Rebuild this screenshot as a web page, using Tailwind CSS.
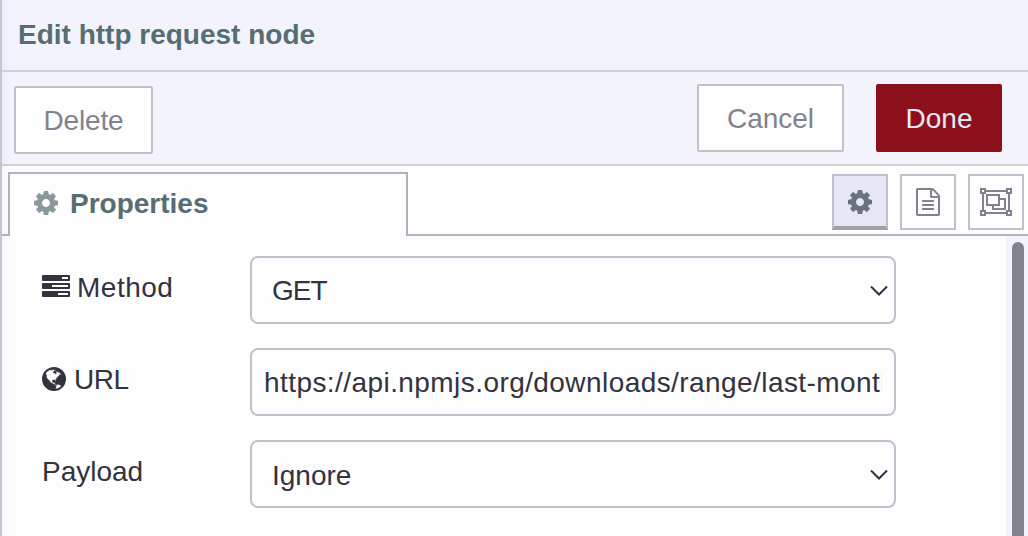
<!DOCTYPE html>
<html lang="en">
<head>
<meta charset="utf-8">
<title>Edit http request node</title>
<script src="https://cdn.jsdelivr.net/npm/@tailwindcss/browser@4"></script>
</head>
<body class="w-[1028px] h-[536px] overflow-hidden bg-[#fdfdfe] font-['Liberation_Sans',Arial,sans-serif] text-[28px] leading-[32px] text-[#33333d]">
<svg class="hidden">
  <symbol id="cog" viewBox="0 0 1792 1792"><path d="M1152 896q0-106-75-181t-181-75-181 75-75 181 75 181 181 75 181-75 75-181zm512-109v222q0 12-8 23t-20 13l-185 28q-19 54-39 91 35 50 107 138 10 12 10 25t-9 23q-27 37-99 108t-94 71q-12 0-26-9l-138-108q-44 23-91 38-16 136-29 186-7 28-36 28h-222q-14 0-24.5-8.5t-11.5-21.5l-28-184q-49-16-90-37l-141 107q-10 9-25 9-14 0-25-11-126-114-165-168-7-10-7-23 0-12 8-23 15-21 51-66.5t54-70.5q-27-50-41-99l-183-27q-13-2-21-12.5t-8-23.5v-222q0-12 8-23t19-13l186-28q14-46 39-92-40-57-107-138-10-12-10-24 0-10 9-23 26-36 98.5-107.5t94.5-71.5q13 0 26 10l138 107q44-23 91-38 16-136 29-186 7-28 36-28h222q14 0 24.5 8.5t11.5 21.5l28 184q49 16 90 37l142-107q9-9 24-9 13 0 25 10 129 119 165 170 7 8 7 22 0 12-8 23-15 21-51 66.5t-54 70.5q26 50 41 98l183 28q13 2 21 12.5t8 23.5z"/></symbol>
</svg>
<div class="flex h-[536px] flex-col border-l-2 border-[#c5c4d2]">
  <header class="h-[72px] border-b-2 border-[#d0cfdc] bg-linear-to-r from-[#ebebf5] to-[#f3f3fc] to-[8px] pl-4 pt-[19px] font-bold text-[#566e73]">Edit http request node</header>
  <div class="flex h-[94px] items-start border-b-2 border-[#d0cfdc] bg-linear-to-r from-[#ebebf5] to-[#f3f3fc] to-[8px] pl-3 pr-[26px] pt-3 text-[#82828f]">
    <button class="mt-[2px] h-[68px] w-[139px] rounded-[2px] border-2 border-[#c1c0cd] bg-[#fdfdfe] pt-[2px] tracking-[-0.15px]">Delete</button>
    <button class="ml-auto h-[68px] w-[147px] rounded-[2px] border-2 border-[#c1c0cd] bg-[#fdfdfe] pt-[2px]">Cancel</button>
    <button class="ml-8 h-[68px] w-[126px] rounded-[2px] bg-[#8c101c] pt-[2px] text-[#e6e7f5]">Done</button>
  </div>
  <div class="flex h-[70px] items-stretch bg-linear-to-r from-[#f5f5fa] to-[#fdfdfe] to-[8px]">
    <div class="w-[6px] border-b-2 border-[#b2b1bd]"></div>
    <div class="mt-[6px] flex w-[400px] border-2 border-b-0 border-[#b2b1bd] bg-[#fdfdfe] pl-[22px] pt-[14px] font-bold text-[#566e73]">
      <svg class="mt-px size-[28px] fill-[#8a979c]"><use href="#cog"/></svg>
      <span class="ml-[10px]">Properties</span>
    </div>
    <div class="flex flex-1 justify-end gap-3 border-b-2 border-[#b2b1bd] pr-1 pt-2">
      <div class="flex size-[56px] justify-center border-2 border-b-4 border-[#c1c0cd] border-b-[#a0a2aa] bg-[#e6e7f5] pt-3"><svg class="size-[28px] fill-[#6a727e]"><use href="#cog"/></svg></div>
      <div class="flex size-[56px] justify-center border-2 border-[#c1c0cd] pt-3"><svg class="size-[28px] fill-[#82828f]" viewBox="0 0 1792 1792"><path d="M1596 380q28 28 48 76t20 88v1152q0 40-28 68t-68 28h-1344q-40 0-68-28t-28-68v-1600q0-40 28-68t68-28h896q40 0 88 20t76 48zm-444-244v376h376q-10-29-22-41l-313-313q-12-12-41-22zm384 1528v-1024h-416q-40 0-68-28t-28-68v-416h-768v1536h1280zm-1024-864q0-14 9-23t23-9h704q14 0 23 9t9 23v64q0 14-9 23t-23 9h-704q-14 0-23-9t-9-23v-64zm736 224q14 0 23 9t9 23v64q0 14-9 23t-23 9h-704q-14 0-23-9t-9-23v-64q0-14 9-23t23-9h704zm0 256q14 0 23 9t9 23v64q0 14-9 23t-23 9h-704q-14 0-23-9t-9-23v-64q0-14 9-23t23-9h704z"/></svg></div>
      <div class="flex size-[56px] justify-center border-2 border-[#c1c0cd] pt-3"><svg class="h-[28px] w-[32px]" viewBox="0 0 32 28" fill="none" stroke="#82828f" stroke-width="2"><path d="M6 3h20M6 25h20M3 6v16M29 6v16M1 1h4v4h-4zM27 1h4v4h-4zM1 23h4v4h-4zM27 23h4v4h-4zM7 7h12v10h-12zM19 11h6v10h-12v-4"/></svg></div>
    </div>
  </div>
  <div class="flex flex-1 bg-linear-to-r from-[#f5f5fa] to-[#fdfdfe] to-[8px]">
    <div class="flex flex-1 flex-col gap-6 pl-10 pt-5">
      <div class="flex h-[68px]">
        <label class="flex w-[208px] pt-4"><svg class="mt-px size-[28px] fill-[#33333d]" viewBox="0 0 1792 1792"><path d="M1024 1408h640v-128h-640v128zm-384-512h1024v-128h-1024v128zm640-512h384v-128h-384v128zm512 832v256q0 26-19 45t-45 19h-1664q-26 0-45-19t-19-45v-256q0-26 19-45t45-19h1664q26 0 45 19t19 45zm0-512v256q0 26-19 45t-45 19h-1664q-26 0-45-19t-19-45v-256q0-26 19-45t45-19h1664q26 0 45 19t19 45zm0-512v256q0 26-19 45t-45 19h-1664q-26 0-45-19t-19-45v-256q0-26 19-45t45-19h1664q26 0 45 19t19 45z"/></svg><span class="ml-[7px] tracking-[0.5px]">Method</span></label>
        <div class="flex w-[646px] items-center justify-between rounded-[8px] border-2 border-[#c1c0cd] pl-5 pr-[5px]"><span class="pt-[2px] tracking-[-1px]">GET</span><svg class="mt-px h-3 w-5" viewBox="0 0 20 12" fill="none" stroke="#33333d" stroke-width="2"><path d="M2 1.5l8 8 8-8"/></svg></div>
      </div>
      <div class="flex h-[68px]">
        <label class="flex w-[208px] pt-4"><svg class="-ml-[2px] mt-px size-[28px] fill-[#33333d]" fill-rule="evenodd" viewBox="0 0 1792 1792"><path d="M896 128a768 768 0 1 1 0 1536a768 768 0 1 1 0-1536zm274 521q-2 1-9.5 9.5t-13.5 9.5q2 0 4.5-5t5-11 3.5-7q6-7 22-15 14-6 52-12 34-8 51 11-2-2 9.5-13t14.5-12q3-2 15-4.5t15-7.5l2-22q-12 1-17.5-7t-6.5-21q0 2-6 8 0-7-4.5-8t-11.5 1-9 1q-10-3-15-7.5t-8-16.5-4-15q-2-5-9.5-11t-9.5-10q-1-2-2.5-5.5t-3-6.5-4-5.5-5.5-2.5-7 5-7.5 10-4.5 5q-3-2-6-1.5t-4.5 1-4.5 3-5 3.5q-3 2-8.5 3t-8.5 2q15-5-1-11-10-4-16-3 9-4 7.5-12t-8.5-14h5q-1-4-8.5-8.5t-17.5-8.5-13-6q-8-5-34-9.5t-33-.5q-5 6-4.5 10.5t4 14 3.5 12.5q1 6-5.5 13t-6.5 12q0 7 14 15.5t10 21.5q-3 8-16 16t-16 12q-5 8-1.5 18.5t10.5 16.5q2 2 1.5 4t-3.5 4.5-5.5 4-6.5 3.5l-3 2q-11 5-20.5-6t-13.5-26q-7-25-16-30-23-8-29 1-5-13-41-26-25-9-58-4 6-1 0-15-7-15-19-12 3-6 4-17.5t1-13.5q3-13 12-23 1-1 7-8.5t9.5-13.5.5-6q35 4 50-11 5-5 11.5-17t10.5-17q9-6 14-5.5t14.5 5.5 14.5 5q14 1 15.5-11t-7.5-20q12 1 3-17-4-7-8-9-12-4-27 5-8 4 2 8-1-1-9.5 10.5t-16.5 17.5-16-5q-1-1-5.5-13.5t-9.5-13.5q-8 0-16 15 3-8-11-15t-24-8q19-12-8-27-7-4-20.5-5t-19.5 4q-5 7-5.5 11.5t5 8 10.5 5.5 11.5 4 8.5 3q14 10 8 14-2 1-8.5 3.5t-11.5 4.5-6 4q-3 4 0 14t-2 14q-5-5-9-17.5t-7-16.5q7 9-25 6l-10-1q-4 0-16 2t-20.5 1-13.5-8q-4-8 0-20 1-4 4-2-4-3-11-9.5t-10-8.5q-46 15-94 41 6 1 12-1 5-2 13-6.5t10-5.5q34-14 42-7l5-5q14 16 20 25-7-4-30-1-20 6-22 12 7 12 5 18-4-3-11.5-10t-14.5-11-15-5q-16 0-22 1-146 80-235 222 7 7 12 8 4 1 5 9t2.5 11 11.5-3q9 8 3 19 1-1 44 27 19 17 21 21 3 11-10 18-1-2-9-9t-9-4q-3 5 .5 18.5t10.5 12.5q-7 0-9.5 16t-2.5 35.5-1 23.5l2 1q-3 12 5.5 34.5t21.5 19.5q-13 3 20 43 6 8 8 9 3 2 12 7.5t15 10 10 10.5q4 5 10 22.5t14 23.5q-2 6 9.5 20t10.5 23q-1 0-2.5 1t-2.5 1q3 7 15.5 14t15.5 13q1 3 2 10t3 11 8 2q2-20-24-62-15-25-17-29-3-5-5.5-15.5t-4.5-14.5q2 0 6 1.5t8.5 3.5 7.5 4 2 3q-3 7 2 17.5t12 18.5 17 19 12 13q6 6 14 19.5t0 13.5q9 0 20 10t17 20q5 8 8 26t5 24q2 7 8.5 13.5t12.5 9.5l16 8 13 7q5 2 18.5 10.5t21.5 11.5q10 4 16 4t14.5-2.5 13.5-3.5q15-2 29 15t21 21q36 19 55 11-2 1 .5 7.5t8 15.5 9 14.5 5.5 8.5q5 6 18 15t18 15q6-4 7-9-3 8 7 20t18 10q14-3 14-32-31 15-49-18 0-1-2.5-5.5t-4-8.5-2.5-8.5 0-7.5 5-3q9 0 10-3.5t-2-12.5-4-13q-1-8-11-20t-12-15q-5 9-16 8t-16-9q0 1-1.5 5.5t-1.5 6.5q-13 0-15-1 1-3 2.5-17.5t3.5-22.5q1-4 5.5-12t7.5-14.5 4-12.5-4.5-9.5-17.5-2.5q-19 1-26 20-1 3-3 10.5t-5 11.5-9 7q-7 3-24 2t-24-5q-13-8-22.5-29t-9.5-37q0-10 2.5-26.5t3-25-5.5-24.5q3-2 9-9.5t10-10.5q2-1 4.5-1.5t4.5 0 4-1.5 3-6q-1-1-4-3-3-3-4-3 7 3 28.5-1.5t27.5 1.5q15 11 22-2 0-1-2.5-9.5t-.5-13.5q5 27 29 9 3 3 15.5 5t17.5 5q3 2 7 5.5t5.5 4.5 5-.5 8.5-6.5q10 14 12 24 11 40 19 44 7 3 11 2t4.5-9.5 0-14-1.5-12.5l-1-8v-18l-1-8q-15-3-18.5-12t1.5-18.5 15-18.5q1-1 8-3.5t15.5-6.5 12.5-8q21-19 15-35 7 0 11-9-1 0-5-3t-7.5-5-4.5-2q9-5 2-16 5-3 7.5-11t7.5-10q9 12 21 2 7-8 1-16 5-7 20.5-10.5t18.5-9.5q7 2 8-2t1-12 3-12q4-5 15-9t13-5l17-11q3-4 0-4 18 2 31-11 10-11-6-20 3-6-3-9.5t-15-5.5q3-1 11.5-.5t10.5-1.5q15-10-7-16-17-5-43 12zm-163 877q206-36 351-189-3-3-12.5-4.5t-12.5-3.5q-18-7-24-8 1-7-2.5-13t-8-9-12.5-8-11-7q-2-2-7-6t-7-5.5-7.5-4.5-8.5-2-10 1l-3 1q-3 1-5.5 2.5t-5.5 3-4 3 0 2.5q-21-17-36-22-5-1-11-5.5t-10.5-7-10-1.5-11.5 7q-5 5-6 15t-2 13q-7-5 0-17.5t2-18.5q-3-6-10.5-4.5t-12 4.5-11.5 8.5-9 6.5-8.5 5.5-8.5 7.5q-3 4-6 12t-5 11q-2-4-11.5-6.5t-9.5-5.5q2 10 4 35t5 38q7 31-12 48-27 25-29 40-4 22 12 26 0 7-8 20.5t-7 21.5q0 6 2 16z"/></svg><span class="ml-[6px] tracking-[-0.5px]">URL</span></label>
        <div class="flex w-[646px] items-center rounded-[8px] border-2 border-[#c1c0cd] px-3"><span class="w-[618px] overflow-hidden whitespace-nowrap pt-[2px] tracking-[0.43px]">https://api.npmjs.org/downloads/range/last-month</span></div>
      </div>
      <div class="flex h-[68px]">
        <label class="w-[208px] pt-4">Payload</label>
        <div class="flex w-[646px] items-center justify-between rounded-[8px] border-2 border-[#c1c0cd] pl-5 pr-[5px]"><span class="pt-[3px]">Ignore</span><svg class="mt-px h-3 w-5" viewBox="0 0 20 12" fill="none" stroke="#33333d" stroke-width="2"><path d="M2 1.5l8 8 8-8"/></svg></div>
      </div>
    </div>
    <div class="w-[22px] bg-[#f3f3fc] pl-[6px] pr-1 pt-[6px]"><div class="h-full rounded-t-full bg-[#82828f]"></div></div>
  </div>
</div>
</body>
</html>
